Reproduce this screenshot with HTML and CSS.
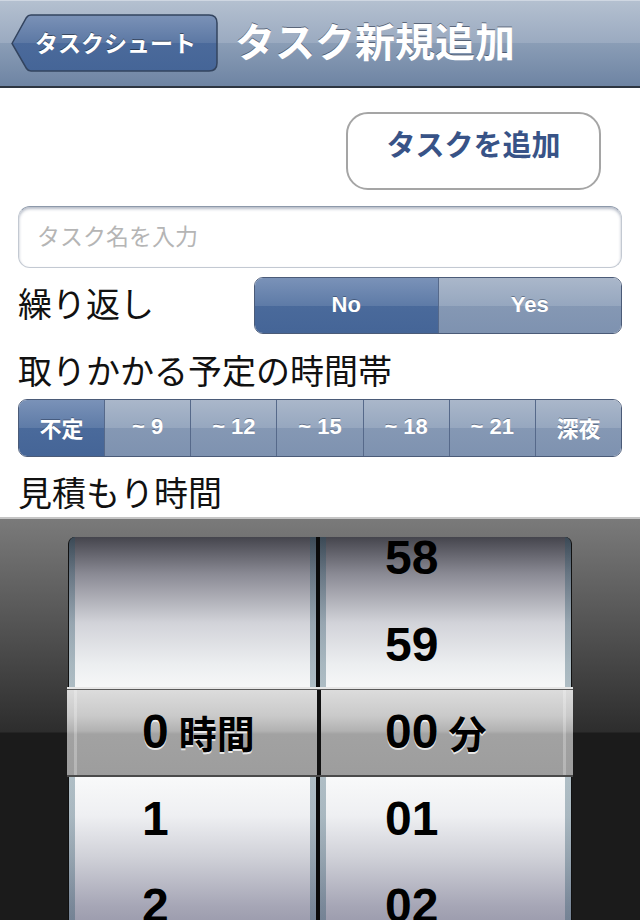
FILE: index.html
```html
<!DOCTYPE html>
<html lang="ja">
<head>
<meta charset="utf-8">
<title>タスク新規追加</title>
<link rel="stylesheet" href="styles.css">
</head>
<body>
<div class="screen">
  <header class="navbar">
    <div class="back">
      <svg class="back-shape" width="208" height="59" viewBox="0 0 208 59">
        <defs>
          <linearGradient id="bg" x1="0" y1="0" x2="0" y2="1">
            <stop offset="0" stop-color="#7b92b7"/>
            <stop offset="0.5" stop-color="#5c78a4"/>
            <stop offset="0.5" stop-color="#4b6a9b"/>
            <stop offset="1" stop-color="#456597"/>
          </linearGradient>
        </defs>
        <path d="M1 29.5 L15.5 3.5 Q17 1 20 1 H198 Q206 1 206 9 V49 Q206 57 198 57 H20 Q17 57 15.5 54.5 Z" fill="url(#bg)" stroke="#33445f" stroke-width="1.5"/>
      </svg>
      <span class="back-label">タスクシュート</span>
    </div>
    <h1 class="title">タスク新規追加</h1>
  </header>

  <main class="content">
    <div class="add-row">
      <button class="add-btn">タスクを追加</button>
    </div>
    <div class="field">タスク名を入力</div>

    <div class="repeat-row">
      <span class="label">繰り返し</span>
      <div class="seg seg-small">
        <div class="seg-item on">No</div>
        <div class="seg-item">Yes</div>
      </div>
    </div>

    <div class="label label-block">取りかかる予定の時間帯</div>
    <div class="seg seg-wide">
      <div class="seg-item on jp">不定</div>
      <div class="seg-item">~ 9</div>
      <div class="seg-item">~ 12</div>
      <div class="seg-item">~ 15</div>
      <div class="seg-item">~ 18</div>
      <div class="seg-item">~ 21</div>
      <div class="seg-item jp">深夜</div>
    </div>

    <div class="label label-est">見積もり時間</div>
  </main>

  <section class="picker">
    <div class="wheels">
      <div class="wheel wheel-h">
        <div class="cell"></div>
        <div class="cell"></div>
        <div class="cell sel"><span class="num">0</span><span class="unit">時間</span></div>
        <div class="cell"><span class="num">1</span></div>
        <div class="cell"><span class="num">2</span></div>
      </div>
      <div class="wheel wheel-m">
        <div class="cell"><span class="num">58</span></div>
        <div class="cell"><span class="num">59</span></div>
        <div class="cell sel"><span class="num">00</span><span class="unit">分</span></div>
        <div class="cell"><span class="num">01</span></div>
        <div class="cell"><span class="num">02</span></div>
      </div>
    </div>
    <div class="selbar"></div>
  </section>
</div>
</body>
</html>
```

FILE: styles.css
```css
* { box-sizing: border-box; }

html, body {
  margin: 0;
  padding: 0;
  background: #fff;
}

body {
  width: 640px;
  height: 920px;
  overflow: hidden;
  font-family: "Noto Sans CJK JP", "Liberation Sans", sans-serif;
}

.screen {
  width: 640px;
  height: 920px;
  display: flex;
  flex-direction: column;
}

/* ---------- nav bar ---------- */
.navbar {
  height: 88px;
  flex: none;
  display: flex;
  align-items: center;
  padding-left: 11px;
  background: linear-gradient(#b4c0d0 0, #9aaac0 50%, #8a9db6 50%, #6e84a3 100%);
  border-top: 1px solid #cfd7e2;
  border-bottom: 2px solid #2d3540;
}

.back {
  position: relative;
  width: 208px;
  height: 59px;
  display: flex;
  align-items: center;
}

.back-shape {
  position: absolute;
  left: 0;
  top: 0;
}

.back-label {
  position: relative;
  padding-left: 24px;
  font-size: 23px;
  font-weight: 700;
  color: #fff;
  text-shadow: 0 -1px 0 rgba(0, 0, 0, 0.45);
  line-height: 1;
  padding-bottom: 2px;
}

.title {
  margin: 0 0 0 16px;
  font-size: 40px;
  font-weight: 700;
  color: #fff;
  line-height: 1;
  padding-bottom: 8px;
  text-shadow: 0 -1px 0 rgba(40, 50, 70, 0.6);
}

/* ---------- content ---------- */
.content {
  flex: none;
  padding: 0 18px;
  display: flex;
  flex-direction: column;
}

.add-row {
  display: flex;
  justify-content: flex-end;
  padding-right: 21px;
  margin-top: 24px;
}

.add-btn {
  width: 255px;
  height: 78px;
  border: 2px solid #a5a5a5;
  border-radius: 22px;
  background: #fff;
  font-family: "Noto Sans CJK JP", sans-serif;
  font-size: 29px;
  font-weight: 700;
  color: #385387;
  padding: 0 0 16px 0;
  line-height: 1;
}

.field {
  margin-top: 16px;
  height: 62px;
  border: 1px solid #c3c9d2;
  border-top-color: #8d99aa;
  border-radius: 12px;
  box-shadow: inset 0 2px 3px rgba(90, 105, 130, 0.45);
  padding-left: 18px;
  display: flex;
  align-items: center;
  font-size: 23px;
  color: #b5b5b5;
  line-height: 1;
  padding-bottom: 4px;
}

.label {
  font-size: 34px;
  color: #111;
  line-height: 1;
}

.repeat-row {
  margin-top: 9px;
  height: 57px;
  display: flex;
  align-items: center;
  justify-content: space-between;
}

.repeat-row .label {
  padding-bottom: 6px;
}

.seg {
  display: flex;
  border: 1px solid #4b5b78;
  border-radius: 9px;
  overflow: hidden;
}

.seg-small {
  width: 368px;
  height: 57px;
}

.seg-wide {
  height: 58px;
  margin-top: 12px;
}

.seg-item {
  flex: 1 1 0;
  display: flex;
  align-items: center;
  justify-content: center;
  font-family: "Liberation Sans", Arial, sans-serif;
  font-weight: 700;
  font-size: 22px;
  color: #fff;
  text-shadow: 0 -1px 0 rgba(30, 45, 70, 0.45);
  background: linear-gradient(#aab7ca 0, #96a7bf 50%, #8598b4 50%, #7e92b0 100%);
  border-left: 1px solid #56698a;
  padding-bottom: 2px;
}

.seg-item:first-child { border-left: 0; }

.seg-item.on {
  background: linear-gradient(#7a92b8 0, #5e7ba7 50%, #4a6a9b 50%, #456597 100%);
}

.seg-item.jp {
  font-family: "Noto Sans CJK JP", sans-serif;
  font-size: 22px;
}

.label-block {
  margin-top: 19px;
}

.label-est {
  margin-top: 18px;
  height: 42px;
}

/* ---------- picker ---------- */
.picker {
  flex: 1;
  position: relative;
  border-top: 2px solid #c4c4c4;
  background: linear-gradient(#7a7a7a 0, #2d2d2d 213px, #1b1b1b 214px, #1b1b1b 100%);
  padding: 18px 0 0 68px;
  overflow: hidden;
}

.wheels {
  width: 504px;
  height: 410px;
  display: flex;
  gap: 4px;
  background: #0a0a0a;
  border-radius: 7px 7px 0 0;
  overflow: hidden;
  border-left: 1px solid #111;
  border-right: 1px solid #111;
}

.wheel {
  display: flex;
  flex-direction: column;
  background:
    linear-gradient(to right, rgba(40, 80, 100, 0.35) 0, rgba(40, 80, 100, 0.35) 6px, transparent 6px, transparent calc(100% - 6px), rgba(40, 80, 100, 0.35) calc(100% - 6px)),
    linear-gradient(#45454d 0, #8a8a94 9%, #d2d3d9 21%, #eceef0 31%, #fafbfb 39%, #fafbfb 57%, #eeeff2 68%, #d0d1d8 78%, #a6a6b6 90%, #8e8ea0 100%);
}

.wheel-h { width: 247px; padding-left: 73px; }
.wheel-m { width: 251px; padding-left: 65px; }

.cell {
  flex: none;
  height: 87px;
  display: flex;
  align-items: center;
  gap: 10px;
  color: #000;
}

.cell:first-child { margin-top: -23px; }

.num {
  font-family: "Liberation Sans", Arial, sans-serif;
  font-weight: 700;
  font-size: 48px;
  line-height: 1;
}

.unit {
  font-family: "Noto Sans CJK JP", sans-serif;
  font-weight: 700;
  font-size: 38px;
  line-height: 1;
}

.sel {
  position: relative;
  z-index: 2;
  text-shadow: 0 2px 0 rgba(255, 255, 255, 0.75);
}

.selbar {
  position: absolute;
  left: 67px;
  top: 170px;
  width: 506px;
  height: 88px;
  z-index: 1;
  border-top: 1px solid #5a5a5a;
  border-bottom: 2px solid #4a4a4a;
  box-shadow: 0 -2px 0 #e6e6e6;
  background:
    linear-gradient(to right, transparent 250px, #111 250px, #111 254px, transparent 254px),
    linear-gradient(to right, transparent 0, transparent 7px, rgba(255,255,255,0.25) 7px, rgba(255,255,255,0.25) 10px, transparent 10px, transparent 496px, rgba(255,255,255,0.25) 496px, rgba(255,255,255,0.25) 499px, transparent 499px),
    linear-gradient(#dcdcdc 0, #cacaca 30%, #b2b2b2 48%, #a2a2a2 52%, #9d9d9d 100%);
}
```
